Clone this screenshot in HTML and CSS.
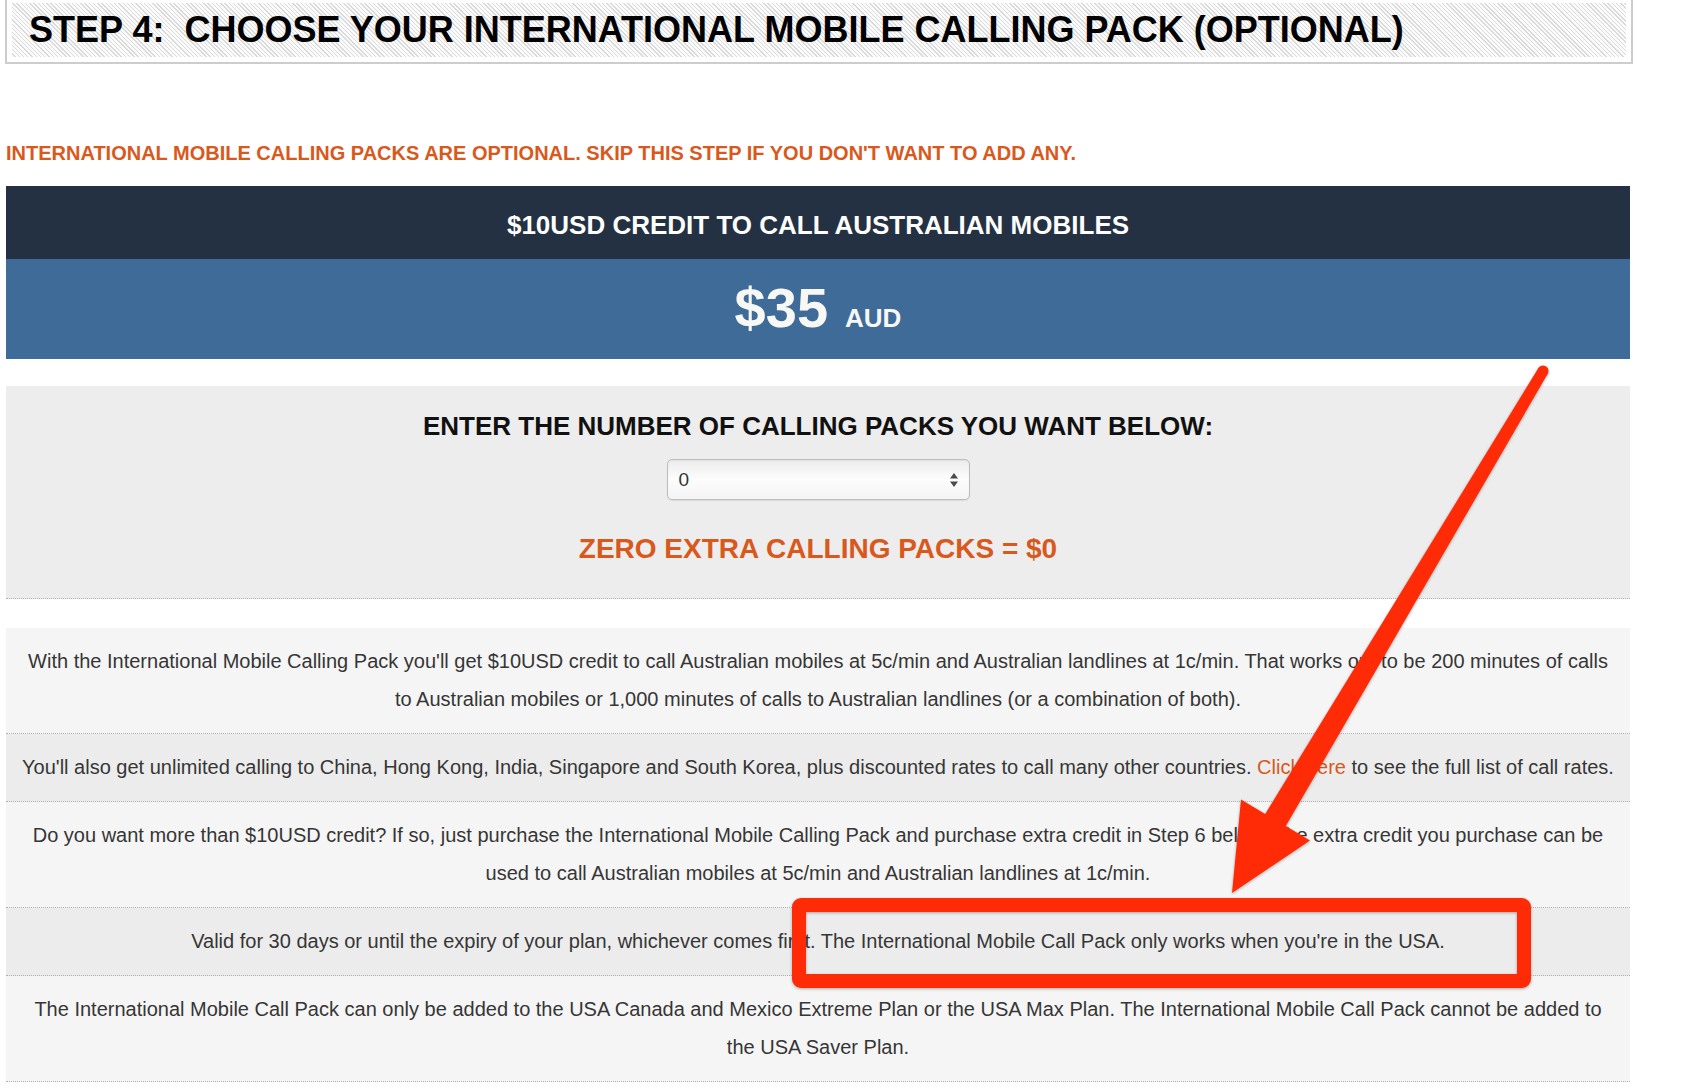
FILE: index.html
```html
<!DOCTYPE html>
<html lang="en">
<head>
    <meta charset="UTF-8">
    <meta name="viewport" content="width=device-width, initial-scale=1.0">
    <title>Step 4 - International Mobile Calling Pack</title>
    <link rel="stylesheet" href="styles.css">
</head>
<body>

<div class="page">

    <section class="step-title">
        <h1>STEP 4:&nbsp; CHOOSE YOUR INTERNATIONAL MOBILE CALLING PACK (OPTIONAL)</h1>
    </section>

    <p class="notice">INTERNATIONAL MOBILE CALLING PACKS ARE OPTIONAL. SKIP THIS STEP IF YOU DON'T WANT TO ADD ANY.</p>

    <div class="pack">
        <div class="pack-name">$10USD CREDIT TO CALL AUSTRALIAN MOBILES</div>
        <div class="pack-price"><span class="amount">$35</span><span class="currency">AUD</span></div>
    </div>

    <div class="quantity">
        <h3>ENTER THE NUMBER OF CALLING PACKS YOU WANT BELOW:</h3>
        <div class="select-wrap">
            <select id="packCount" onchange="updateTotal()">
                <option value="0">0</option>
                <option value="1">1</option>
                <option value="2">2</option>
                <option value="3">3</option>
                <option value="4">4</option>
                <option value="5">5</option>
            </select>
            <svg class="select-arrows" width="10" height="16" viewBox="0 0 10 16">
                <path d="M5 1 L9 6.5 L1 6.5 Z" fill="#4a4a4a"/>
                <path d="M5 15 L9 9.5 L1 9.5 Z" fill="#4a4a4a"/>
            </svg>
        </div>
        <p class="total" id="packTotal">ZERO EXTRA CALLING PACKS = $0</p>
    </div>

    <div class="info">
        <p class="info-row">With the International Mobile Calling Pack you'll get $10USD credit to call Australian mobiles at 5c/min and Australian landlines at 1c/min. That works out to be 200 minutes of calls to Australian mobiles or 1,000 minutes of calls to Australian landlines (or a combination of both).</p>
        <p class="info-row shaded">You'll also get unlimited calling to China, Hong Kong, India, Singapore and South Korea, plus discounted rates to call many other countries. <a href="#">Click here</a> to see the full list of call rates.</p>
        <p class="info-row">Do you want more than $10USD credit? If so, just purchase the International Mobile Calling Pack and purchase extra credit in Step 6 below. The extra credit you purchase can be used to call Australian mobiles at 5c/min and Australian landlines at 1c/min.</p>
        <p class="info-row shaded">Valid for 30 days or until the expiry of your plan, whichever comes first. The International Mobile Call Pack only works when you're in the USA.</p>
        <p class="info-row">The International Mobile Call Pack can only be added to the USA Canada and Mexico Extreme Plan or the USA Max Plan. The International Mobile Call Pack cannot be added to the USA Saver Plan.</p>
    </div>

</div>

<!-- red markup drawn over the screenshot -->
<svg class="annotation" width="1686" height="1088" viewBox="0 0 1686 1088">
    <rect x="799" y="905" width="725" height="76" rx="2" fill="none" stroke="#ff2a06" stroke-width="14"/>
    <circle cx="1543" cy="371" r="5.5" fill="#ff2a06"/>
    <polygon fill="#ff2a06" points="1547.7,373.8 1285.8,826.1 1310,840.5 1232,893 1241,799.5 1265.2,813.9 1538.3,368.2"/>
</svg>

<script>
    function updateTotal() {
        let count = parseInt(document.getElementById('packCount').value);
        let words = ['ZERO', 'ONE', 'TWO', 'THREE', 'FOUR', 'FIVE'];
        let label = count === 1 ? ' EXTRA CALLING PACK = $' : ' EXTRA CALLING PACKS = $';
        document.getElementById('packTotal').innerHTML = words[count] + label + (count * 35);
    }
</script>

</body>
</html>
```

FILE: styles.css
```css
body {
    font-family: "Liberation Sans", Arial, sans-serif;
    background-color: #ffffff;
    color: #363636;
    margin: 0;
    padding: 0;
}

.page {
    width: 1624px;
    margin-left: 6px;
}

.step-title {
    width: 1614px;
    margin: -4px 0 0 -1px;
    padding: 5px;
    border: 2px solid #cdcdcd;
}

.step-title h1 {
    margin: 0;
    height: 54px;
    padding-left: 17px;
    line-height: 54px;
    font-size: 36px;
    font-weight: bold;
    color: #000000;
    background: repeating-linear-gradient(45deg, #fbfbfb 0, #fbfbfb 2px, #dadada 2px, #dadada 3px);
}

.notice {
    margin: 77px 0 21px;
    line-height: 24px;
    font-size: 20px;
    font-weight: bold;
    color: #d9581c;
}

.pack-name {
    height: 67px;
    padding-top: 6px;
    line-height: 67px;
    text-align: center;
    font-size: 26px;
    font-weight: bold;
    color: #ffffff;
    background-color: #243142;
}

.pack-price {
    height: 98px;
    padding-bottom: 2px;
    line-height: 98px;
    text-align: center;
    font-size: 56px;
    font-weight: bold;
    color: #f7f7f4;
    background-color: #3f6b99;
}

.pack-price .currency {
    margin-left: 17px;
    font-size: 26px;
}

.quantity {
    margin-top: 27px;
    padding: 24px 0 32px;
    text-align: center;
    background-color: #ededed;
    border-bottom: 1px dotted #b0b0b0;
}

.quantity h3 {
    margin: 0;
    line-height: 32px;
    font-size: 26px;
    color: #111111;
}

.select-wrap {
    position: relative;
    width: 303px;
    height: 41px;
    margin: 17px auto 0;
}

.select-wrap select {
    width: 100%;
    height: 41px;
    padding: 0 11px;
    -webkit-appearance: none;
    appearance: none;
    font-family: "Liberation Sans", Arial, sans-serif;
    font-size: 19px;
    color: #333333;
    border: 1px solid #bdbdbd;
    border-radius: 5px;
    background: linear-gradient(#ececec, #fdfdfd 50%, #f4f4f4);
    box-shadow: 0 1px 1px rgba(0, 0, 0, 0.08), inset 0 1px 2px rgba(0, 0, 0, 0.05);
}

.select-arrows {
    position: absolute;
    right: 11px;
    top: 13px;
    pointer-events: none;
}

.total {
    margin: 32px 0 0;
    line-height: 34px;
    font-size: 28px;
    font-weight: bold;
    color: #d9581c;
}

.info {
    margin-top: 29px;
}

.info-row {
    margin: 0;
    padding: 14px 13px 15px;
    line-height: 38px;
    font-size: 20px;
    text-align: center;
    background-color: #f5f5f5;
    border-bottom: 1px dotted #b0b0b0;
}

.info-row.shaded {
    background-color: #ececec;
}

.info-row a {
    color: #d9581c;
    text-decoration: none;
}

.annotation {
    position: absolute;
    top: 0;
    left: 0;
    pointer-events: none;
    filter: drop-shadow(0 1px 1.5px rgba(0, 0, 0, 0.3));
}
```
